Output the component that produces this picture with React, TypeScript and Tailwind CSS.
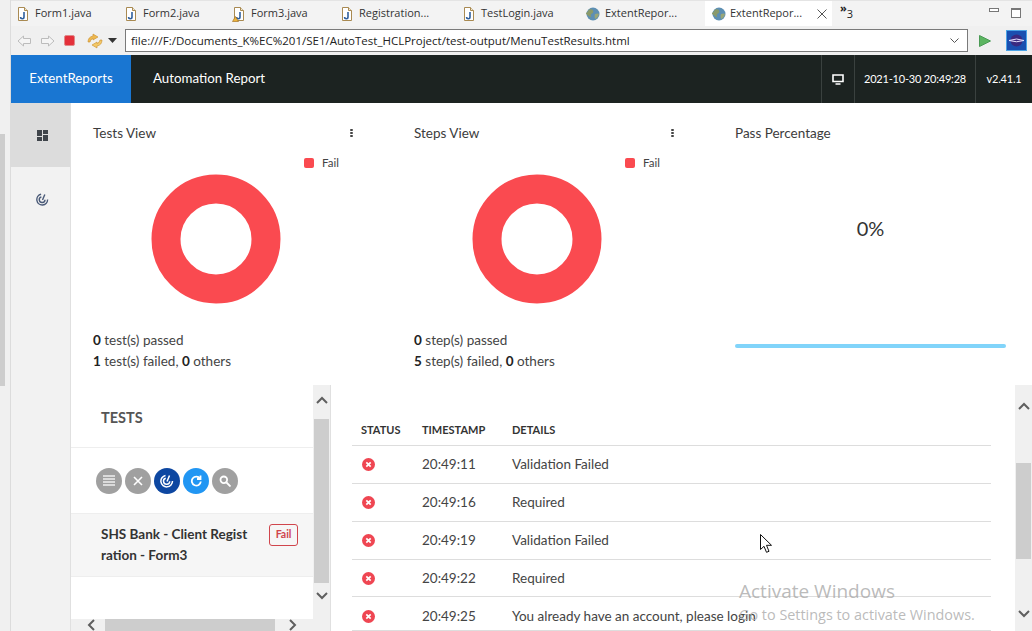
const font = "font-['Lato','Noto_Sans',sans-serif]"

function JavaIcon({ warn }: { warn?: boolean }) {
  return (
    <svg width="14" height="16" viewBox="0 0 14 16" className="shrink-0">
      <path d="M2.500 1.500h6l3 3v10h-9z" fill="#fff" stroke="#a98a52" />
      <path d="M8.500 1.500v3h3" fill="#f0e6cf" stroke="#a98a52" />
      <path d="M8 6v5q0 1.700-1.700 1.700T4.600 11" fill="none" stroke="#2f5f9e" strokeWidth="1.600" />
      {warn && <path d="M3.500 10.500l3 5h-6z" fill="#eeb53c" stroke="#a5762a" strokeWidth=".7" />}
    </svg>
  )
}

function GlobeIcon() {
  return (
    <svg width="14" height="14" viewBox="0 0 14 14" className="shrink-0">
      <circle cx="7" cy="7" r="6.500" fill="#5d8fb3" />
      <path d="M3 2.500q3-1 4 1t-1 3-1 3-3-1-1-3z" fill="#8a9a6a" />
      <path d="M9 7q3-1 4 0-1 4-4 5-1-3 0-5z" fill="#98a678" />
    </svg>
  )
}

function Tab({ label, warn, width }: { label: string; warn?: boolean; width: string }) {
  return (
    <div className={`flex items-center gap-[5px] pl-[5px] text-[11px] text-[#333] ${width}`}>
      <JavaIcon warn={warn} />
      <span>{label}</span>
    </div>
  )
}

function RadarIcon({ color = '#fff', size = 14 }: { color?: string; size?: number }) {
  return (
    <svg width={size} height={size} viewBox="0 0 14 14" fill="none" stroke={color} strokeWidth="1.500">
      <path d="M5.500 1.400a5.800 5.800 0 1 0 7 5.600" />
      <path d="M5.800 4.200a3.100 3.100 0 1 0 3.900 3" />
      <path d="M7 7.500l2.500-6" />
    </svg>
  )
}

function Legend() {
  return (
    <div className="flex items-center justify-end pr-[31px] text-[11.500px] text-[#444]">
      <span className="h-[10px] w-[10px] rounded-[2px] bg-[#fa4a50]" />
      <span className="ml-[8px]">Fail</span>
    </div>
  )
}

function Dots() {
  return (
    <div className="flex flex-col gap-[1px]">
      <span className="h-[2px] w-[3px] rounded-full bg-[#444]" />
      <span className="h-[2px] w-[3px] rounded-full bg-[#444]" />
      <span className="h-[2px] w-[3px] rounded-full bg-[#444]" />
    </div>
  )
}

function ChartCard({ title, unit, failed }: { title: string; unit: string; failed: number }) {
  return (
    <div className="flex w-[321px] flex-col pl-[22px] pr-[22px]">
      <div className="flex h-[20px] items-center justify-between pr-[17px] text-[13.500px] text-[#3c3c3c]">
        <span>{title}</span>
        <Dots />
      </div>
      <div className="mt-[11px]">
        <Legend />
      </div>
      <div className="mt-[3px] flex justify-center pr-[32px]">
        <svg width="130" height="130" viewBox="0 0 130 130">
          <circle cx="65" cy="65" r="50" fill="none" stroke="#fa4a50" strokeWidth="29" />
        </svg>
      </div>
      <div className="mt-[26px] text-[13.500px] leading-[21px] text-[#444]">
        <div><b className="text-[#222]">0</b> {unit}(s) passed</div>
        <div><b className="text-[#222]">{failed}</b> {unit}(s) failed, <b className="text-[#222]">0</b> others</div>
      </div>
    </div>
  )
}

function ScrollArrow({ dir }: { dir: 'up' | 'down' | 'left' | 'right' }) {
  const d = { up: 'M1 7l5-5 5 5', down: 'M1 2l5 5 5-5', left: 'M7 1L2 6l5 5', right: 'M2 1l5 5-5 5' }[dir]
  return (
    <svg width="12" height="12" viewBox="0 0 12 12" fill="none" stroke="#5f5f5f" strokeWidth="2">
      <path d={d} />
    </svg>
  )
}

function RoundButton({ bg, children }: { bg: string; children: React.ReactNode }) {
  return <div className={`flex h-[26px] w-[26px] items-center justify-center rounded-full ${bg}`}>{children}</div>
}

const rows = [
  ['20:49:11', 'Validation Failed', 'h-[38px]'],
  ['20:49:16', 'Required', 'h-[38px]'],
  ['20:49:19', 'Validation Failed', 'h-[38px]'],
  ['20:49:22', 'Required', 'h-[37px]'],
  ['20:49:25', 'You already have an account, please login', 'h-[34px] pt-[6px]'],
]

export default function App() {
  return (
    <div className={`relative flex h-[631px] w-[1032px] overflow-hidden bg-white ${font}`}>
      {/* eclipse left gutter */}
      <div className="flex w-[11px] shrink-0 flex-col border-r border-[#dcdcdc] bg-[#f0f0f0]">
        <div className="mt-[134px] h-[252px] w-[5px] bg-[#cdcdcd]" />
      </div>

      <div className="flex min-w-0 flex-1 flex-col">
        {/* editor tabs */}
        <div className="flex h-[26px] items-center border-t border-[#e4e4e4] bg-[#f3f3f3] font-['Open_Sans',sans-serif]">
          <Tab label="Form1.java" width="w-[108px]" />
          <Tab label="Form2.java" width="w-[108px]" />
          <Tab label="Form3.java" warn width="w-[108px]" />
          <Tab label="Registration..." width="w-[122px]" />
          <Tab label="TestLogin.java" width="w-[122px]" />
          <div className="flex w-[126px] items-center gap-[5px] pl-[7px] text-[11px] text-[#333]">
            <GlobeIcon />
            <span>ExtentRepor...</span>
          </div>
          <div className="flex h-[26px] w-[127px] items-center gap-[4px] bg-white pl-[7px] text-[11px] text-[#333]">
            <GlobeIcon />
            <span>ExtentRepor...</span>
            <svg width="10" height="10" viewBox="0 0 10 10" className="ml-[11px]" stroke="#555" fill="none">
              <path d="M.5.5l9 9M9.500.5l-9 9" />
            </svg>
          </div>
          <div className="ml-[8px] flex self-start pt-[1px] text-[11px] text-[#222]">
            <span className="font-bold leading-[12px]">»</span>
            <span className="mt-[6px] leading-[12px]">3</span>
          </div>
          <div className="ml-auto mr-[11px] flex items-start gap-[12px] self-start pt-[7px]">
            <div className="h-[4px] w-[10px] border border-[#777] bg-white" />
            <div className="h-[10px] w-[10px] border border-[#777] border-t-2 bg-white" />
          </div>
        </div>

        {/* browser toolbar */}
        <div className="flex h-[29px] items-center bg-[#f0f0f0] pl-[6px] font-['Open_Sans',sans-serif]">
          <svg width="15" height="12" viewBox="0 0 15 12" fill="#f5f5f5" stroke="#bcbcbc">
            <path d="M6.500 1L1 6l5.500 5V8.500h7v-5h-7z" />
          </svg>
          <svg width="15" height="12" viewBox="0 0 15 12" fill="#f5f5f5" stroke="#bcbcbc" className="ml-[8px]">
            <path d="M8.500 1L14 6l-5.500 5V8.500h-7v-5h7z" />
          </svg>
          <div className="ml-[9px] h-[11px] w-[11px] rounded-[2px] border border-[#e08a8a] bg-[#e4303a]" />
          <svg width="16" height="16" viewBox="0 0 16 16" className="ml-[12px]">
            <path d="M1 9q0-5 5-6V1l5 3-5 3V5.500Q3.500 6 3 9z" fill="#eeb84f" stroke="#c98f2c" strokeWidth=".6" />
            <path d="M15 7q0 5-5 6v2l-5-3 5-3v1.500q2.500-.5 3-3.500z" fill="#f3c868" stroke="#c98f2c" strokeWidth=".6" />
          </svg>
          <svg width="9" height="5" viewBox="0 0 9 5" className="ml-[5px]"><path d="M0 0h9L4.500 5z" fill="#333" /></svg>
          <div className="ml-[8px] flex h-[23px] w-[843px] items-center justify-between border border-[#7a7a7a] bg-white pl-[5px] pr-[8px] text-[11.500px] text-[#222]">
            <span>file:///F:/Documents_K%EC%201/SE1/AutoTest_HCLProject/test-output/MenuTestResults.html</span>
            <svg width="9" height="5" viewBox="0 0 9 5" fill="none" stroke="#555"><path d="M.5.5l4 4 4-4" /></svg>
          </div>
          <svg width="12" height="12" viewBox="0 0 12 12" className="ml-[11px]">
            <path d="M.5.5l11 5.500-11 5.500z" fill="#5cb561" stroke="#4a9a55" />
          </svg>
          <div className="ml-[15px] flex h-[21px] w-[21px] shrink-0 items-center justify-center border border-[#4aa3e6] bg-[#1a4fb0]">
            <svg width="17" height="17" viewBox="0 0 17 17" fill="none">
              <circle cx="8.500" cy="8.500" r="6" fill="#3a2a80" />
              <path d="M1 8.500q7.500-3 15 0-7.500 2.500-15 0z" stroke="#e6e0ff" />
            </svg>
          </div>
        </div>

        {/* report navbar */}
        <div className="flex h-[48px] items-center bg-[#1c2321] text-[13.300px] text-white">
          <div className="flex h-full w-[120px] items-center justify-center bg-[#1976d2]">ExtentReports</div>
          <div className="ml-[22px]">Automation Report</div>
          <div className="ml-auto flex h-full items-center text-[11px] tracking-[-.2px]">
            <div className="flex h-full w-[33px] items-center justify-center border-l border-[#3a413f]">
              <svg width="12" height="11" viewBox="0 0 12 11" fill="none" stroke="#fff" strokeWidth="1.600">
                <path d="M1 1h10v6.500H1zM3.500 10h5" />
              </svg>
            </div>
            <div className="flex h-full w-[121px] items-center justify-center border-l border-[#3a413f]">2021-10-30 20:49:28</div>
            <div className="flex h-full w-[57px] items-center justify-center border-l border-[#3a413f]">v2.41.1</div>
          </div>
        </div>

        <div className="flex min-h-0 flex-1">
          {/* side nav */}
          <div className="flex w-[60px] shrink-0 flex-col border-r border-[#e0e0e0] bg-[#f2f2f2]">
            <div className="flex h-[64px] items-center justify-center bg-[#dcdcdc] pl-[3px]">
              <svg width="11" height="11" viewBox="0 0 11 11" fill="#3f444a">
                <path d="M0 0h5v6H0zM6 0h5v4H6zM0 7h5v4H0zM6 5h5v6H6z" />
              </svg>
            </div>
            <div className="flex h-[64px] items-center justify-center pl-[3px]">
              <RadarIcon color="#4a5a78" size={13} />
            </div>
          </div>

          <div className="flex min-w-0 flex-1 flex-col">
            {/* dashboard */}
            <div className="flex h-[282px] shrink-0 pt-[20px]">
              <ChartCard title="Tests View" unit="test" failed={1} />
              <ChartCard title="Steps View" unit="step" failed={5} />
              <div className="flex flex-1 flex-col pl-[22px] pr-[26px]">
                <div className="flex h-[20px] items-center text-[13.500px] text-[#3c3c3c]">Pass Percentage</div>
                <div className="mt-[71px] text-center text-[20px] leading-[28px] text-[#333]">0%</div>
                <div className="mt-[102px] h-[4px] rounded-full bg-[#81d4fa]" />
              </div>
            </div>

            <div className="flex min-h-0 flex-1">
              {/* test list */}
              <div className="relative flex w-[260px] shrink-0 flex-col overflow-hidden border-r border-[#e0e0e0]">
                <div className="flex min-h-0 flex-1">
                  <div className="flex w-[243px] flex-col">
                    <div className="flex h-[63px] items-center border-b border-[#eee] pl-[30px] pt-[4px] text-[14.500px] font-bold text-[#555]">TESTS</div>
                    <div className="flex h-[66px] items-center gap-[3px] border-b border-[#eee] pl-[25px]">
                      <RoundButton bg="bg-[#a0a0a0]">
                        <svg width="12" height="11" viewBox="0 0 12 11" stroke="#eee" strokeWidth="1.300"><path d="M0 1h12M0 4h12M0 7h12M0 10h12" /></svg>
                      </RoundButton>
                      <RoundButton bg="bg-[#a0a0a0]">
                        <svg width="10" height="10" viewBox="0 0 10 10" stroke="#fff" strokeWidth="1.600"><path d="M1 1l8 8M9 1l-8 8" /></svg>
                      </RoundButton>
                      <RoundButton bg="bg-[#0d47a1]"><RadarIcon /></RoundButton>
                      <RoundButton bg="bg-[#2196f3]">
                        <svg width="12" height="12" viewBox="0 0 12 12" fill="none" stroke="#fff" strokeWidth="1.800">
                          <path d="M10 3.500a4.500 4.500 0 1 0 .8 3" /><path d="M10.500 .5v3.500H7" />
                        </svg>
                      </RoundButton>
                      <RoundButton bg="bg-[#a0a0a0]">
                        <svg width="12" height="12" viewBox="0 0 12 12" fill="none" stroke="#fff" strokeWidth="1.800">
                          <circle cx="4.800" cy="4.800" r="3.300" /><path d="M7.500 7.500l4 4" />
                        </svg>
                      </RoundButton>
                    </div>
                    <div className="flex h-[63px] justify-between border-b border-[#eee] bg-[#f6f6f6] pl-[30px] pr-[15px] pt-[10px]">
                      <div className="w-[147px] break-all text-[13.500px] leading-[21px] font-bold text-[#333]">SHS Bank - Client Registration - Form3</div>
                      <div className="flex h-[22px] w-[29px] items-center justify-center rounded-[3px] border border-[#d0454c] text-[10.500px] font-bold text-[#d0454c]">Fail</div>
                    </div>
                  </div>
                  <div className="flex w-[17px] flex-col items-center bg-[#f0f0f0]">
                    <div className="flex h-[34px] shrink-0 items-center justify-center"><ScrollArrow dir="up" /></div>
                    <div className="h-[164px] w-[15px] shrink-0 bg-[#cdcdcd]" />
                    <div className="flex h-[28px] shrink-0 items-center justify-center"><ScrollArrow dir="down" /></div>
                  </div>
                </div>
                <div className="flex h-[12px] shrink-0 items-center bg-[#f0f0f0]">
                  <div className="flex w-[34px] pl-[16px]"><ScrollArrow dir="left" /></div>
                  <div className="h-[12px] w-[170px] bg-[#cdcdcd]" />
                  <div className="flex w-[34px] pl-[13px]"><ScrollArrow dir="right" /></div>
                </div>
              </div>

              {/* test detail */}
              <div className="flex min-w-0 flex-1">
                <div className="flex-1 pl-[21px] pr-[24px] pt-[27px]">
                  <div className="flex h-[34px] items-center border-b border-[#ddd] pt-[3px] text-[11px] font-bold text-[#333]">
                    <span className="w-[61px] pl-[9px]">STATUS</span>
                    <span className="w-[99px] pl-[9px]">TIMESTAMP</span>
                    <span>DETAILS</span>
                  </div>
                  {rows.map(([time, details, h], i) => (
                    <div key={i} className={`flex items-center border-b border-[#ddd] text-[13.500px] text-[#444] ${h}`}>
                      <span className="flex w-[61px] pl-[10px]">
                        <svg width="13" height="13" viewBox="0 0 13 13">
                          <circle cx="6.500" cy="6.500" r="6.500" fill="#ef4652" />
                          <path d="M4.300 4.300l4.400 4.400M8.700 4.300l-4.400 4.400" stroke="#fff" strokeWidth="1.700" />
                        </svg>
                      </span>
                      <span className="w-[99px] pl-[9px]">{time}</span>
                      <span className="whitespace-nowrap">{details}</span>
                    </div>
                  ))}
                </div>
                <div className="flex w-[17px] shrink-0 flex-col items-center bg-[#f0f0f0]">
                  <div className="flex h-[78px] shrink-0 items-start justify-center pt-[17px]"><ScrollArrow dir="up" /></div>
                  <div className="h-[96px] w-[15px] shrink-0 bg-[#cdcdcd]" />
                  <div className="mt-auto flex h-[30px] items-start justify-center pt-[8px]"><ScrollArrow dir="down" /></div>
                </div>
              </div>
            </div>
          </div>
        </div>
      </div>

      {/* windows watermark */}
      <div className="absolute left-[739px] top-[579px] font-['Open_Sans',sans-serif] text-[#a9a9a9]/80">
        <div className="text-[19px] leading-[25px]">Activate Windows</div>
        <div className="text-[14.400px] leading-[21px]">Go to Settings to activate Windows.</div>
      </div>
      {/* mouse cursor */}
      <svg width="13" height="20" viewBox="0 0 13 20" className="absolute left-[760px] top-[534px]">
        <path d="M.5.5v15l3.500-3.200 2.500 6 2.500-1-2.500-6h5z" fill="#fff" stroke="#111" />
      </svg>
    </div>
  )
}
